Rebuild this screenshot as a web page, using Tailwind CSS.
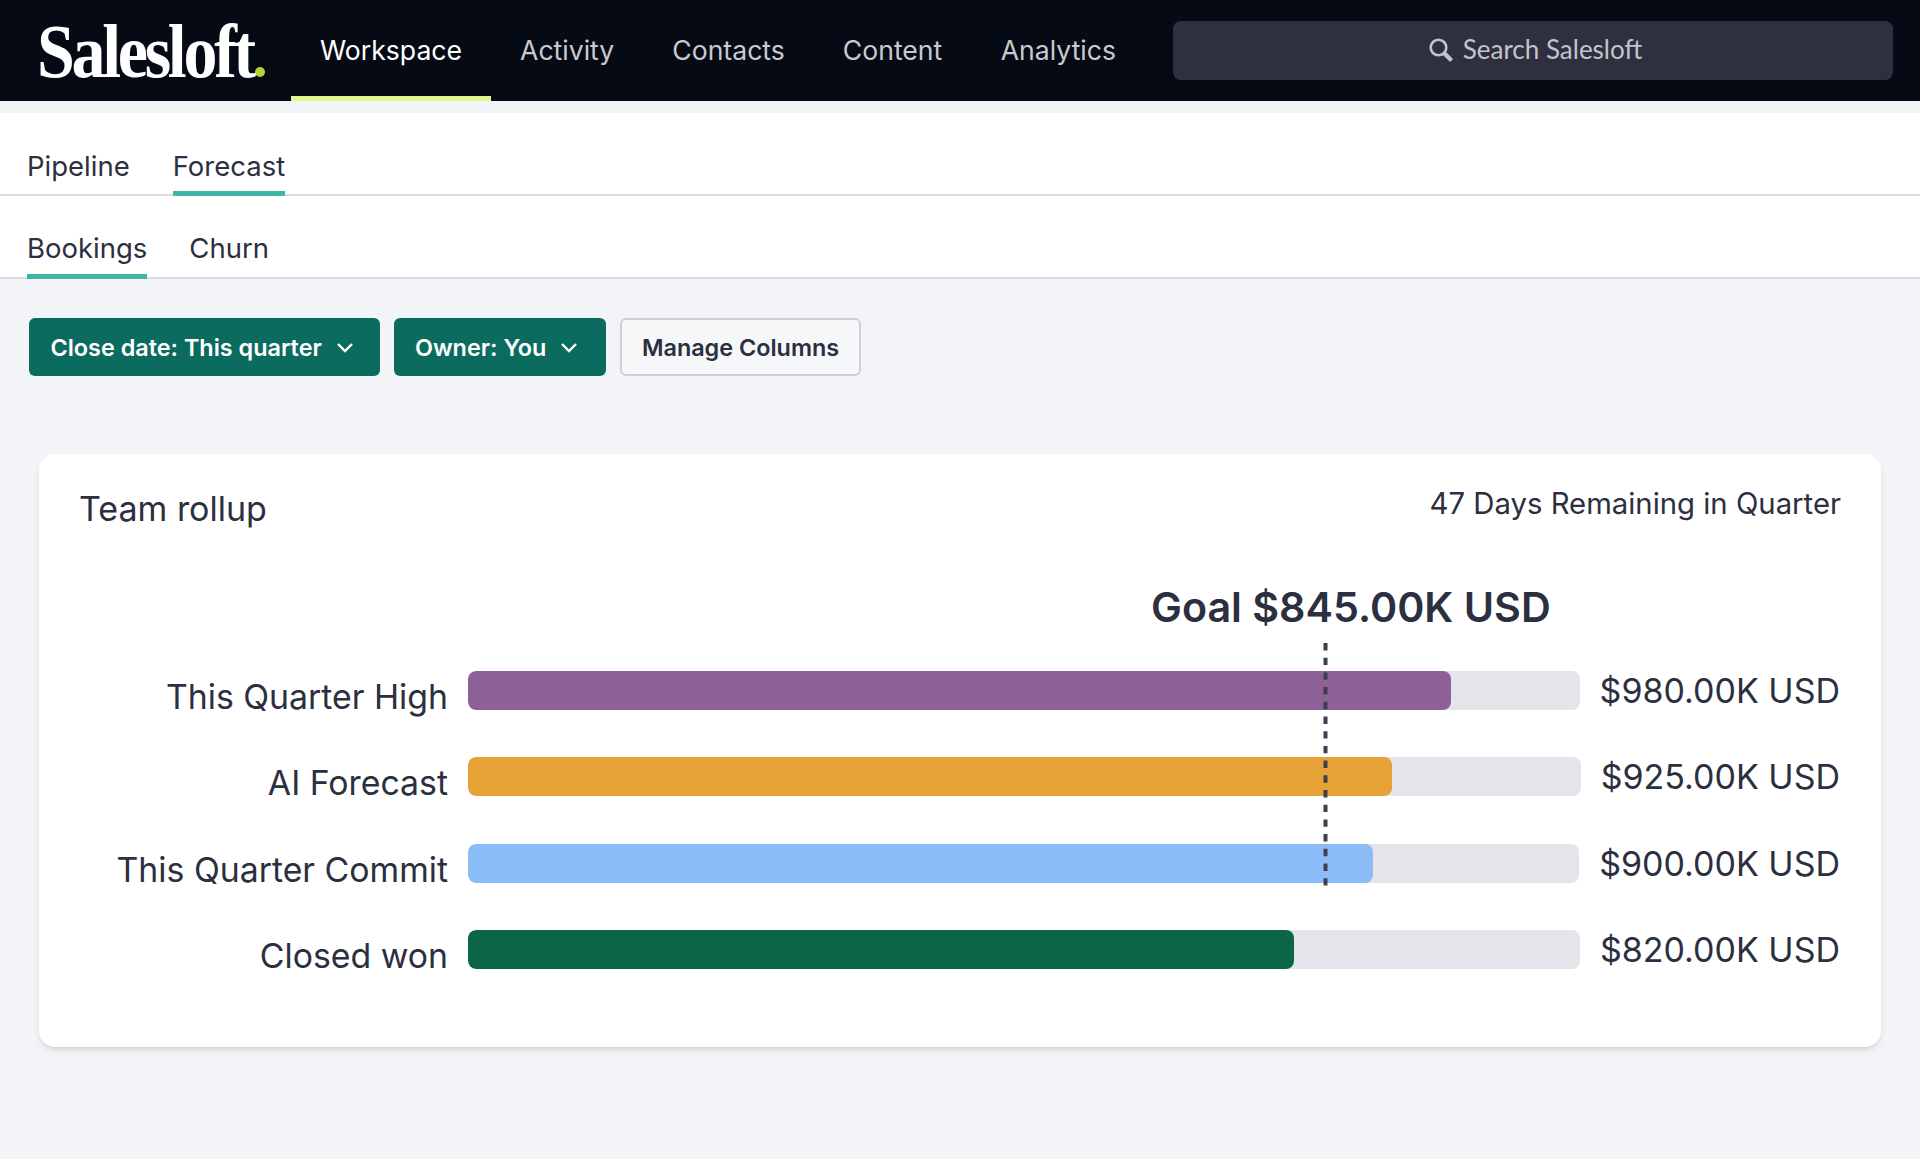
<!DOCTYPE html>
<html lang="en">
<head>
<meta charset="utf-8">
<title>Salesloft Forecast</title>
<script src="https://cdn.jsdelivr.net/npm/@tailwindcss/browser@4"></script>
</head>
<body class="bg-[#f3f4f8] font-['Inter',sans-serif] text-[#2b2f40] min-h-[1159px] overflow-hidden">
<header class="h-[101px] bg-[#060a15] flex items-stretch pl-[37px] pr-[27px]">
  <div class="w-[254px] flex items-center shrink-0">
    <span class="font-['Liberation_Serif',serif] font-bold text-[68px] leading-none tracking-[-3.3px] text-white scale-y-[1.12]">Salesloft</span>
    <span class="w-[10px] h-[10px] rounded-full bg-[#b5d334] self-end mb-[24px] ml-[2px]"></span>
  </div>
  <nav class="flex items-stretch text-[26.6px] text-[#c9cacd]">
    <a class="px-[29px] flex items-center text-white border-b-[5px] border-[#e1f68c] pt-[5px]">Workspace</a>
    <a class="px-[29px] flex items-center">Activity</a>
    <a class="px-[29px] flex items-center">Contacts</a>
    <a class="px-[29px] flex items-center">Content</a>
    <a class="px-[29.5px] flex items-center">Analytics</a>
  </nav>
  <div class="ml-auto self-center w-[720px] h-[59px] rounded-lg bg-[#2e3040] flex items-center justify-center gap-[9px] text-[#c3c4c8] font-['Lato',sans-serif] text-[26px] pb-[2px] pl-[4px]">
    <svg width="26" height="26" viewBox="0 0 26 26" fill="none" stroke="#c3c4c8"><circle cx="10.5" cy="10.5" r="7.8" stroke-width="2.6"/><path d="M16 16l7.5 7.5" stroke-width="4.2"/></svg>
    <span>Search Salesloft</span>
  </div>
</header>
<div class="h-[12px]"></div>
<section class="bg-white">
  <div class="h-[83px] border-b-2 border-[#dcdde3] flex gap-[43px] px-[27px] text-[27.5px]">
    <a class="pt-[31px] leading-[44px]">Pipeline</a>
    <a class="pt-[31px] leading-[44px] border-b-[5px] border-[#3eb5a6] -mb-[2px]">Forecast</a>
  </div>
  <div class="h-[83px] border-b-2 border-[#dcdde3] flex gap-[42px] px-[27px] text-[27.5px]">
    <a class="pt-[30px] leading-[44px] border-b-[5px] border-[#3eb5a6] -mb-[2px]">Bookings</a>
    <a class="pt-[30px] leading-[44px]">Churn</a>
  </div>
</section>
<div class="flex gap-[14px] pl-[28.5px] pt-[39px] text-[23.4px] font-semibold">
  <button class="h-[58px] w-[351.5px] rounded-md bg-[#0b6b5f] text-white flex items-center gap-[14px] pl-[22px] pt-[2px]">Close date: This quarter
    <svg width="18" height="12" viewBox="0 0 18 12" fill="none" stroke="white" stroke-width="2.4"><path d="M2 2l7 7 7-7"/></svg>
  </button>
  <button class="h-[58px] w-[212px] rounded-md bg-[#0b6b5f] text-white flex items-center gap-[14px] pl-[21px] pt-[2px]">Owner: You
    <svg width="18" height="12" viewBox="0 0 18 12" fill="none" stroke="white" stroke-width="2.4"><path d="M2 2l7 7 7-7"/></svg>
  </button>
  <button class="h-[58px] w-[241px] rounded-md bg-[#f6f7f9] border-2 border-[#cdcfd6] flex items-center justify-center pt-[2px]">Manage Columns</button>
</div>
<main class="mx-[39px] mt-[78px] bg-white rounded-2xl shadow-md px-[40px] pt-[30px] pb-[78px]">
  <div class="flex justify-between items-start">
    <h2 class="mt-[5px] text-[34px] leading-[40px]">Team rollup</h2>
    <div class="text-[29.3px] leading-[40px] pr-[0px]">47 Days Remaining in Quarter</div>
  </div>
  <div class="relative">
    <div class="ml-[1072px] mt-[53px] text-[41.25px] leading-[50px] font-semibold whitespace-nowrap">Goal $845.00K USD</div>
    <div class="mt-[39px] flex flex-col gap-[47.4px]">
      <div class="flex h-[39px] pr-[1px]">
        <div class="w-[369px] shrink-0 text-right text-[33.8px] leading-[40px] pt-[6px]">This Quarter High</div>
        <div class="flex-1 ml-[20px] mr-[20px] h-[39px] rounded-lg bg-[#e4e5ea] overflow-hidden"><div class="w-[983px] h-full rounded-lg bg-[#8d6198]"></div></div>
        <div class="text-[34px] leading-[39px] whitespace-nowrap">$980.00K USD</div>
      </div>
      <div class="flex h-[39px] pr-[1px]">
        <div class="w-[369px] shrink-0 text-right text-[33.8px] leading-[40px] pt-[6px]">AI Forecast</div>
        <div class="flex-1 ml-[20px] mr-[20px] h-[39px] rounded-lg bg-[#e4e5ea] overflow-hidden"><div class="w-[924px] h-full rounded-lg bg-[#e6a236]"></div></div>
        <div class="text-[34px] leading-[39px] whitespace-nowrap">$925.00K USD</div>
      </div>
      <div class="flex h-[39px] pr-[1px]">
        <div class="w-[369px] shrink-0 text-right text-[33.8px] leading-[40px] pt-[6px]">This Quarter Commit</div>
        <div class="flex-1 ml-[20px] mr-[20px] h-[39px] rounded-lg bg-[#e4e5ea] overflow-hidden"><div class="w-[904.5px] h-full rounded-lg bg-[#8cbcf8]"></div></div>
        <div class="text-[34px] leading-[39px] whitespace-nowrap">$900.00K USD</div>
      </div>
      <div class="flex h-[39px] pr-[1px]">
        <div class="w-[369px] shrink-0 text-right text-[33.8px] leading-[40px] pt-[6px]">Closed won</div>
        <div class="flex-1 ml-[20px] mr-[20px] h-[39px] rounded-lg bg-[#e4e5ea] overflow-hidden"><div class="w-[825.5px] h-full rounded-lg bg-[#0b6647]"></div></div>
        <div class="text-[34px] leading-[39px] whitespace-nowrap">$820.00K USD</div>
      </div>
    </div>
    <svg class="absolute left-[1244px] top-[61px]" width="5" height="250" viewBox="0 0 5 250"><line x1="2.5" y1="0" x2="2.5" y2="250" stroke="#3c4050" stroke-width="4" stroke-dasharray="7.4 7.3"/></svg>
  </div>
</main>
</body>
</html>
